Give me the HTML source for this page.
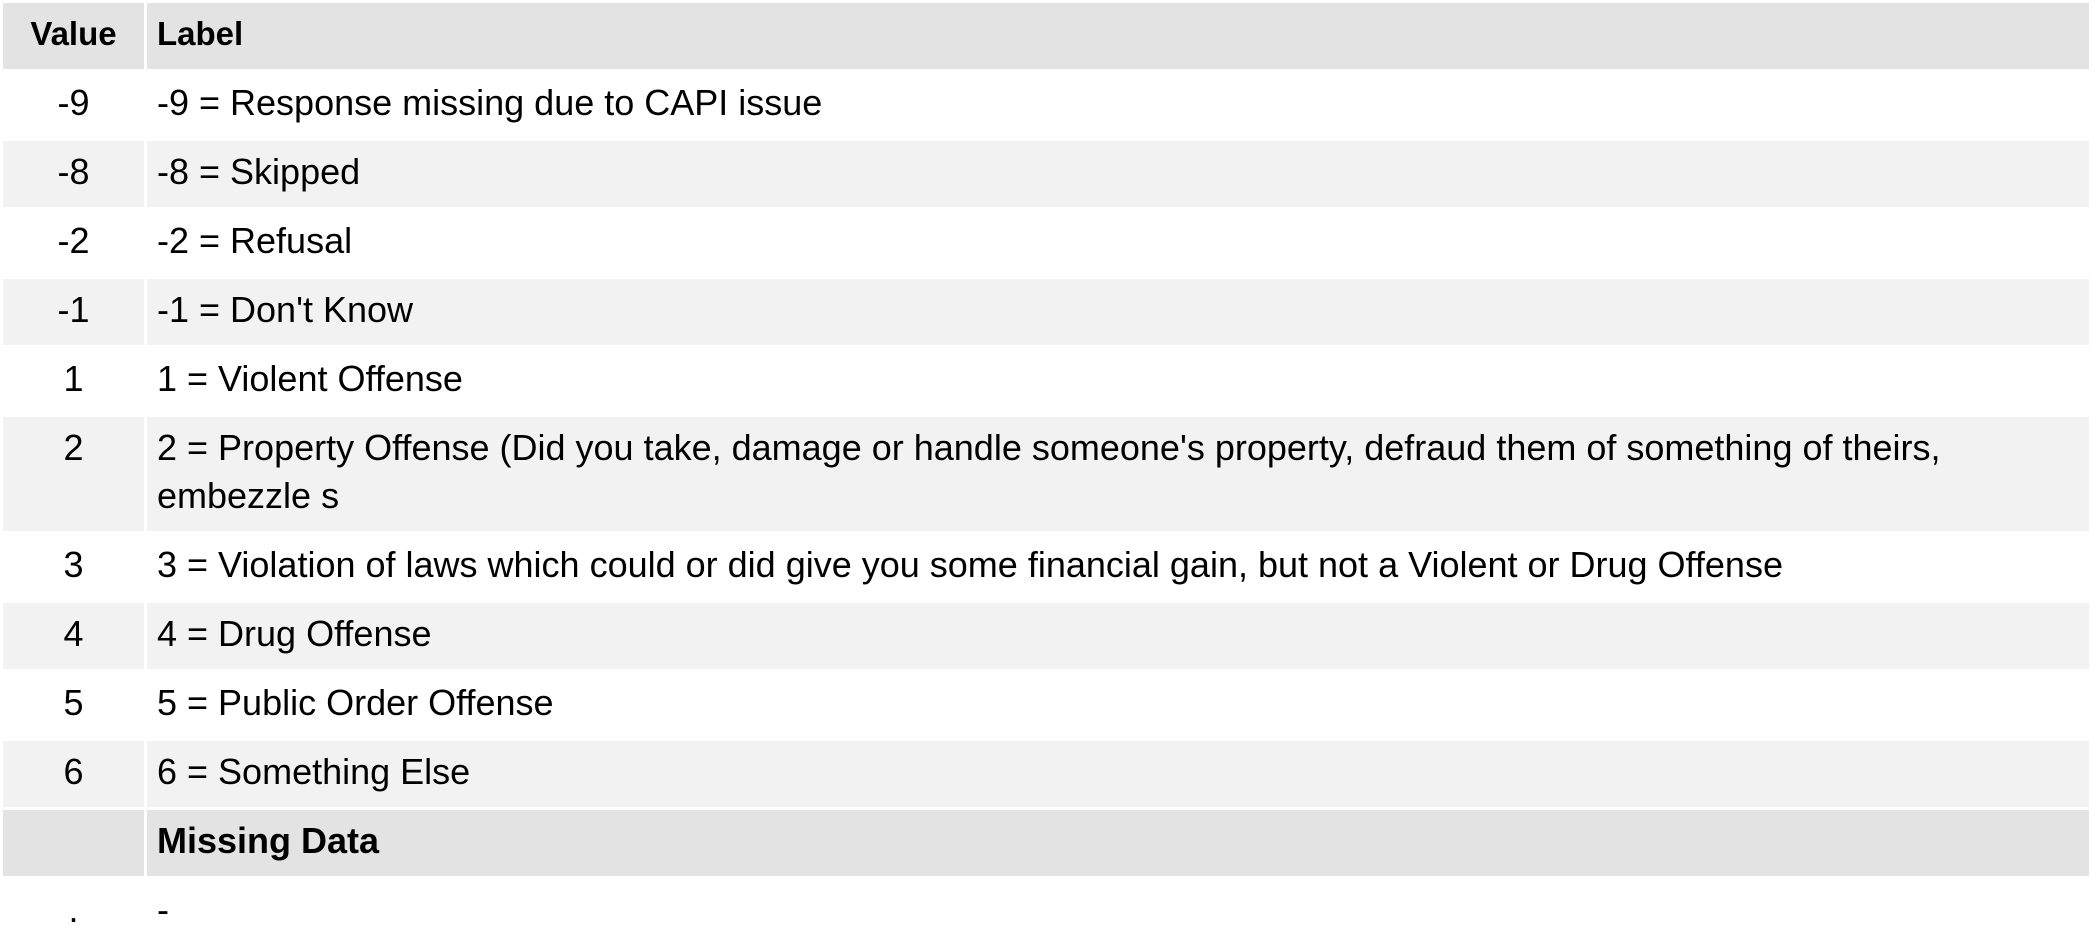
<!DOCTYPE html>
<html><head><meta charset="utf-8"><style>
html,body{margin:0;padding:0;background:#fff;width:2092px;height:949px;overflow:hidden}
table{border-collapse:separate;border-spacing:3px;font-family:"Liberation Sans",Arial,sans-serif;font-size:36px;color:#000;width:2092px;table-layout:fixed}
td,th{padding:7px 10px 11px;line-height:48px;vertical-align:top;white-space:nowrap}
col.v{width:141px}
th{background:#e3e3e3;font-weight:bold;text-align:left;font-size:33px}
th.v{text-align:center}
td.v{text-align:center}
tr.g td{background:#f2f2f2}
tr.h td{background:#e3e3e3;font-weight:bold;font-size:36px}
</style></head><body>
<table>
<colgroup><col class="v"><col></colgroup>
<tr><th class="v">Value</th><th>Label</th></tr>
<tr><td class="v">-9</td><td>-9 = Response missing due to CAPI issue</td></tr>
<tr class="g"><td class="v">-8</td><td>-8 = Skipped</td></tr>
<tr><td class="v">-2</td><td>-2 = Refusal</td></tr>
<tr class="g"><td class="v">-1</td><td>-1 = Don't Know</td></tr>
<tr><td class="v">1</td><td>1 = Violent Offense</td></tr>
<tr class="g"><td class="v">2</td><td>2 = Property Offense (Did you take, damage or handle someone's property, defraud them of something of theirs,<br>embezzle s</td></tr>
<tr><td class="v">3</td><td>3 = Violation of laws which could or did give you some financial gain, but not a Violent or Drug Offense</td></tr>
<tr class="g"><td class="v">4</td><td>4 = Drug Offense</td></tr>
<tr><td class="v">5</td><td>5 = Public Order Offense</td></tr>
<tr class="g"><td class="v">6</td><td>6 = Something Else</td></tr>
<tr class="h"><td class="v"></td><td>Missing Data</td></tr>
<tr><td class="v">.</td><td>-</td></tr>
</table>
</body></html>
